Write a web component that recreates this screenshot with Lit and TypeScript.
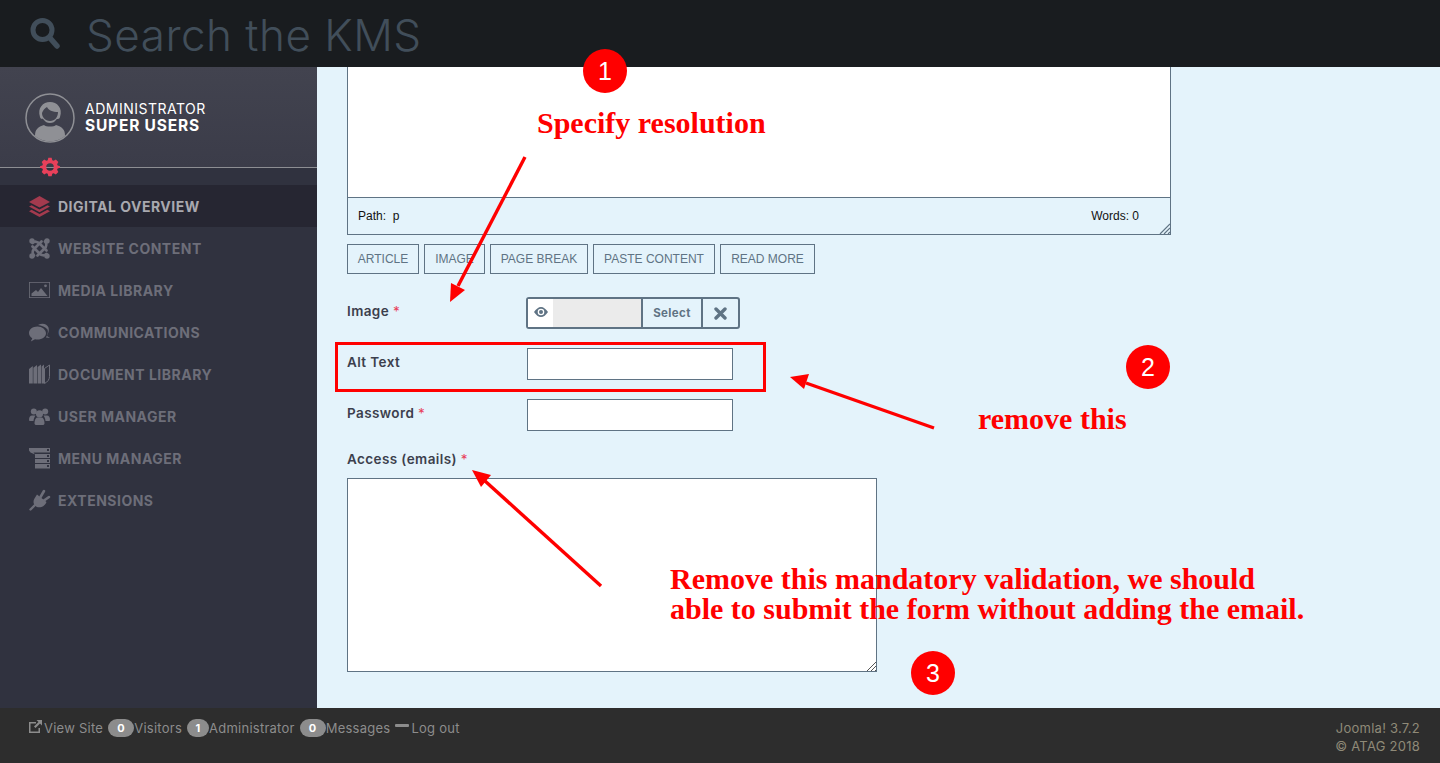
import { html, LitElement, css, svg } from "lit";
import { customElement } from "lit/decorators.js";

const icons: Record<string, unknown> = {
  layers: svg`<path d="M10.500 0 21 6l-10.500 5.600L0 6z"/><path d="M2.600 9.200 0 10.600l10.500 5.700L21 10.600l-2.600-1.400-7.900 4.200z"/><path d="M2.600 13.800 0 15.200 10.500 21 21 15.200l-2.600-1.400-7.900 4.300z"/>`,
  joomla: svg`<g fill="none" stroke="currentColor" stroke-width="2.700" stroke-linecap="round"><path d="M3.500 5c2-2 5-1.500 7 .5l7 7"/><path d="M5 17.500c-2-2-1.500-5 .5-7l7-7"/><path d="M17.500 16c-2 2-5 1.500-7-.5l-7-7"/><path d="M16 3.500c2 2 1.500 5-.5 7l-7 7"/></g><circle cx="3" cy="3" r="2.700"/><circle cx="18" cy="3" r="2.700"/><circle cx="3" cy="18" r="2.700"/><circle cx="18" cy="18" r="2.700"/>`,
  media: svg`<g transform="translate(0 2)"><path fill-rule="evenodd" d="M0 0h21v16H0zm.8.8v14.400h19.400V.8z"/><path d="M2.500 14v-2.500L7 8l2 2 3-4 6.500 8z"/><circle cx="16.500" cy="3.800" r="1.400"/></g>`,
  comm: svg`<path d="M8.500 4.500C3.800 4.500 0 7.300 0 11c0 2.200 1.300 4.100 3.300 5.300l-1.500 3.200 4.200-2.200c.8.200 1.700.300 2.500.300 4.700 0 8.500-2.900 8.500-6.300S13.200 4.500 8.500 4.500z"/><path d="M9 3c4-2.500 9-1.500 10.500 2.500 1 3-.5 6-1.500 8.500l3 2-4-.5c1.500-2.800 2.500-5.800 1.500-8C16.500 5 12.500 3.500 9 3z"/>`,
  docs: svg`<path d="M0 5 3.800 2v17.500H0zM4.400 3.800 8 1v18.500H4.400zM8.600 3 12 .5v19H8.600zM12.600 2.500 15 .5v19h-2.400z"/><path fill="none" stroke="currentColor" d="M15.500 4.500 20.500 1v11.500c0 3-2 5.500-5 7z"/>`,
  users: svg`<g transform="translate(0 1)"><circle cx="4.800" cy="4.500" r="3"/><circle cx="16.200" cy="4.500" r="3"/><circle cx="10.500" cy="6.800" r="3.600"/><path d="M0 13c0-3 1-4.500 3-4.500h3.500C5.300 10 4.800 11.500 4.500 14H1.500C.5 14 0 13.800 0 13zM21 13c0-3-1-4.500-3-4.500h-3.500c1.200 1.500 1.700 3 2 5.500h3c1 0 1.500-.2 1.500-1z"/><path d="M5.500 16c0-3.500 1.500-5.500 3-5.500h4c1.500 0 3 2 3 5.500 0 1.500-.7 2-2 2h-6c-1.300 0-2-.5-2-2z"/></g>`,
  menu: svg`<path d="M0 0h21v4.500H4.500L6 6.500 1.500 4.500 0 2.500z"/><path d="M6 6h15v4H6zM6 11h15v4H6zM6 16h15v4.500H6z"/><g fill="#30323f"><rect x="18" y="1" width="2" height="2"/><rect x="18" y="7" width="2" height="2"/><rect x="18" y="12" width="2" height="2"/><rect x="18" y="17" width="2" height="2"/></g>`,
  plug: svg`<g fill="none" stroke="currentColor" stroke-linecap="round"><path stroke-width="2.600" d="M11.500 7 15 1M15 10.500l5-3.500"/><path stroke-width="2.400" d="M6 15l-4.500 4.500"/></g><path d="M8 4.500 17.500 12c-1 2.500-2.500 4-5 5-2.500.800-5 .300-6.500-1.500C4.200 13.500 4 11 5.500 8.500z"/>`,
};

const nav = [
  ["DIGITAL OVERVIEW", "layers"],
  ["WEBSITE CONTENT", "joomla"],
  ["MEDIA LIBRARY", "media"],
  ["COMMUNICATIONS", "comm"],
  ["DOCUMENT LIBRARY", "docs"],
  ["USER MANAGER", "users"],
  ["MENU MANAGER", "menu"],
  ["EXTENSIONS", "plug"],
];

const gear = svg`<path fill-rule="evenodd" d="M8 0h4l.7 2.800 1.700.7L17 2l3 3-1.500 2.600.7 1.700L22 10v2l-2.800.7-.7 1.700L20 17l-3 3-2.600-1.500-1.700.7L12 22H8l-.7-2.800-1.700-.7L3 20l-3-3 1.500-2.600-.7-1.700L-2 12v-2l2.800-.7.700-1.700L0 5l3-3 2.600 1.500 1.700-.7zM10 6.500a4.500 4.500 0 1 0 0 9 4.500 4.500 0 0 0 0-9z"/>`;

@customElement("app-root")
export class AppRoot extends LitElement {
  static styles = css`
    :host {
      display: flex;
      flex-direction: column;
      position: relative;
      width: 1440px;
      height: 763px;
      overflow: hidden;
      font-family: "Inter", "Liberation Sans", sans-serif;
    }
    .search {
      height: 67px;
      flex: none;
      background: #191c1f;
      display: flex;
      align-items: center;
      gap: 26px;
      padding-left: 30px;
      color: #414e5a;
      font-size: 44px;
      font-weight: 300;
      letter-spacing: 0.5px;
    }
    .search span {
      padding-top: 3px;
    }
    .search svg {
      width: 30px;
      height: 33px;
    }
    .middle {
      flex: 1;
      display: flex;
      min-height: 0;
    }
    .side {
      width: 317px;
      flex: none;
      background: #30323f;
    }
    .profile {
      height: 101px;
      position: relative;
      box-sizing: border-box;
      padding: 26px 0 0 25px;
      display: flex;
      gap: 10px;
      background: linear-gradient(#42434f, #3b3c49);
      border-bottom: 1px solid #8d8e93;
    }
    .avatar {
      width: 50px;
      height: 50px;
      flex: none;
    }
    .who {
      color: #fff;
      font-size: 14px;
      line-height: 17px;
      letter-spacing: 0.5px;
      padding-top: 7px;
    }
    .who b {
      display: block;
      font-size: 15.500px;
      font-weight: 700;
      letter-spacing: 0.8px;
    }
    .gear {
      position: absolute;
      left: 40px;
      top: 90px;
      width: 20px;
      height: 20px;
      fill: #e8405a;
    }
    .nav {
      margin-top: 17px;
    }
    .item {
      height: 42px;
      box-sizing: border-box;
      padding-left: 29px;
      display: flex;
      align-items: center;
      gap: 8px;
      color: #6d6e79;
      font-size: 14px;
      font-weight: 700;
      letter-spacing: 0.5px;
    }
    .item svg {
      width: 21px;
      height: 21px;
      fill: currentColor;
      flex: none;
      overflow: visible;
    }
    .item.on {
      background: #262632;
      color: #a9a9af;
    }
    .item.on svg {
      color: #a33a4e;
    }
    .main {
      flex: 1;
      background: #e4f3fb;
      padding-left: 30px;
      overflow: hidden;
      color: #3c3f4d;
      font-size: 13.500px;
      font-weight: 600;
      letter-spacing: 0.4px;
    }
    .editor {
      width: 824px;
      box-sizing: border-box;
      border: 1px solid #5f7384;
      border-top: 0;
      position: relative;
    }
    .canvas {
      height: 130px;
      background: #fff;
      border-bottom: 1px solid #5f7384;
    }
    .status {
      height: 36px;
      display: flex;
      justify-content: space-between;
      align-items: center;
      padding: 0 31px 0 10px;
      font: 12px "Liberation Sans", sans-serif;
      letter-spacing: 0;
      color: #111;
    }
    .grip {
      position: absolute;
      right: 0;
      bottom: 0;
      width: 11px;
      height: 11px;
    }
    .buttons {
      display: grid;
      grid-template-columns: 72px 61px 98px 122px 95px;
      gap: 5px;
      margin-top: 9px;
    }
    .buttons span {
      height: 30px;
      box-sizing: border-box;
      border: 1px solid #5f7384;
      display: flex;
      align-items: center;
      justify-content: center;
      font: 12px "Liberation Sans", sans-serif;
      letter-spacing: 0;
      color: #5f7384;
    }
    .row {
      display: flex;
      width: 420px;
    }
    .row label {
      width: 180px;
      flex: none;
      line-height: 28px;
    }
    .req {
      color: #e8405a;
      font-weight: 400;
    }
    .picker {
      display: flex;
      height: 32px;
      box-sizing: border-box;
      border: 2px solid #5f7384;
      border-radius: 3px;
      margin-left: -1px;
      color: #5f7384;
    }
    .picker > * {
      display: flex;
      align-items: center;
      justify-content: center;
    }
    .eye {
      width: 25px;
      background: #fff;
      padding-bottom: 2px;
      box-sizing: border-box;
    }
    .empty {
      width: 88px;
      background: #ebebeb;
    }
    .select {
      width: 60px;
      border-left: 2px solid #5f7384;
      box-sizing: border-box;
      font-size: 11.500px;
      font-weight: 700;
    }
    .clear {
      width: 37px;
      border-left: 2px solid #5f7384;
      box-sizing: border-box;
    }
    .input {
      width: 206px;
      height: 32px;
      box-sizing: border-box;
      background: #fff;
      border: 1px solid #5f7384;
    }
    .access {
      margin-top: 20px;
      line-height: 17px;
    }
    .area {
      width: 530px;
      height: 194px;
      box-sizing: border-box;
      margin-top: 10px;
      background: #fff;
      border: 1px solid #5f7384;
      position: relative;
    }
    .foot {
      height: 55px;
      flex: none;
      box-sizing: border-box;
      background: #2d2d2d;
      color: #8c8c8c;
      font-size: 13px;
      letter-spacing: 0.25px;
      display: flex;
      justify-content: space-between;
      padding: 11px 20px 0 29px;
    }
    .links {
      display: flex;
      align-items: flex-start;
      line-height: 18px;
    }
    .links svg {
      width: 13px;
      height: 13px;
      margin: 1px 2px 0 0;
      fill: #8c8c8c;
    }
    .badge {
      height: 18px;
      min-width: 14px;
      padding: 0 6px;
      margin: 0 0 0 5px;
      border-radius: 9px;
      background: #8c8c8c;
      color: #fff;
      font-size: 11px;
      font-weight: 700;
      text-align: center;
    }
    .badge.one {
      min-width: 10px;
    }
    .legal {
      text-align: right;
      line-height: 18px;
      color: #8f8a78;
    }
    .marks {
      position: absolute;
      inset: 0;
      width: 1440px;
      height: 763px;
      pointer-events: none;
    }
    .note {
      position: absolute;
      margin: 0;
      color: #f00;
      font: bold 30px/30px "Liberation Serif", serif;
      white-space: nowrap;
    }
    .dot {
      position: absolute;
      width: 44px;
      height: 44px;
      border-radius: 50%;
      background: #f00;
      color: #fff;
      font: 25px/44px "Liberation Sans", sans-serif;
      text-align: center;
    }
  `;

  render() {
    return html`
      <div class="search">
        <svg viewBox="0 0 30 33"><circle cx="12.500" cy="13" r="9.500" fill="none" stroke="#414e5a" stroke-width="5"/><path d="M20 21l7 8" stroke="#414e5a" stroke-width="5.500" stroke-linecap="round"/></svg>
        <span>Search the KMS</span>
      </div>
      <div class="middle">
        <aside class="side">
          <div class="profile">
            <svg class="avatar" viewBox="0 0 50 50">
              <circle cx="25" cy="25" r="24" fill="none" stroke="#8f9095" stroke-width="1.500"/>
              <path fill="#8f9095" d="M15 24c-3-9 3-15 10-15s13 6 10 15c-1 3-3 1-4 3-1.500 2-3 3-6 3s-4.500-1-6-3c-1-2-3 0-4-3z"/>
              <path fill="#42434f" d="M17 20c1-3 3-5 5-6 1 3 6 5 11 5 0 5-3 9-8 9s-8-4-8-8z"/>
              <path fill="#8f9095" d="M10 43c0-7 3-9 9-11 2 2 10 2 12 0 6 2 9 4 9 11-8 7-22 7-30 0z"/>
            </svg>
            <div class="who">ADMINISTRATOR<b>SUPER USERS</b></div>
            <svg class="gear" viewBox="-2 0 24 22">${gear}</svg>
          </div>
          <div class="nav">
            ${nav.map(
              ([label, icon], i) => html`<div class="item ${i === 0 ? "on" : ""}">
                <svg viewBox="0 0 21 21">${icons[icon]}</svg>${label}
              </div>`
            )}
          </div>
        </aside>
        <main class="main">
          <div class="editor">
            <div class="canvas"></div>
            <div class="status"><span>Path:&nbsp; p</span><span>Words: 0</span></div>
            <svg class="grip" viewBox="0 0 11 11"><path d="M11 1 1 11M11 5l-6 6M11 9l-2 2" stroke="#5f7384" stroke-width="1.200"/></svg>
          </div>
          <div class="buttons">
            ${["ARTICLE", "IMAGE", "PAGE BREAK", "PASTE CONTENT", "READ MORE"].map(
              (b) => html`<span>${b}</span>`
            )}
          </div>
          <div class="row" style="margin-top:23px;height:51px">
            <label>Image <span class="req">*</span></label>
            <div class="picker">
              <span class="eye"><svg width="14" height="10" viewBox="0 0 14 10"><path fill="#5f7384" fill-rule="evenodd" d="M0 5c2-3 4.500-5 7-5s5 2 7 5c-2 3-4.500 5-7 5S2 8 0 5zm7-3.300a3.300 3.300 0 1 0 0 6.600 3.300 3.300 0 0 0 0-6.600z"/><circle cx="7" cy="5" r="2" fill="#5f7384"/></svg></span>
              <span class="empty"></span>
              <span class="select">Select</span>
              <span class="clear"><svg width="13" height="13" viewBox="0 0 13 13"><path d="M2 2l9 9M11 2l-9 9" stroke="#5f7384" stroke-width="3.400" stroke-linecap="round"/></svg></span>
            </div>
          </div>
          <div class="row" style="height:51px">
            <label>Alt Text</label>
            <div class="input"></div>
          </div>
          <div class="row">
            <label>Password <span class="req">*</span></label>
            <div class="input"></div>
          </div>
          <div class="access">Access (emails) <span class="req">*</span></div>
          <div class="area">
            <svg class="grip" viewBox="0 0 11 11"><path d="M11 2 2 11M11 6l-5 5M11 10l-1 1" stroke="#555" stroke-width="1"/></svg>
          </div>
        </main>
      </div>
      <footer class="foot">
        <div class="links">
          <svg viewBox="0 0 13 13"><path d="M0 2h7v1.500H1.500v8h8V8H11v5H0z"/><path d="M7.500 0H13v5.500l-2-2-4.500 4.500-1.500-1.500L9.500 2z"/></svg>View Site
          <span class="badge">0</span>Visitors
          <span class="badge one">1</span>Administrator
          <span class="badge">0</span>Messages
          <svg style="margin:5px 2px 0 5px;width:14px" viewBox="0 0 14 13"><rect y="0" width="14" height="3" rx="1"/></svg>Log out
        </div>
        <div class="legal">Joomla! 3.7.2<br />© ATAG 2018</div>
      </footer>
      <svg class="marks" viewBox="0 0 1440 763">
        <rect x="336.500" y="343.500" width="428" height="47" fill="none" stroke="#f00" stroke-width="3"/>
        <g stroke="#f00" stroke-width="3.400" fill="#f00">
          <path d="M525 157 458 286"/><path stroke="none" d="M450 302l1-19 14 7z"/>
          <path d="M934 428 806 383"/><path stroke="none" d="M790 377l19-3-5 15z"/>
          <path d="M601 586 485 481"/><path stroke="none" d="M472 470l19 5-10 12z"/>
        </g>
      </svg>
      <p class="note" style="left:537px;top:108px">Specify resolution</p>
      <p class="note" style="left:978px;top:404px">remove this</p>
      <p class="note" style="left:670px;top:564px">Remove this mandatory validation, we should<br />able to submit the form without adding the email.</p>
      <div class="dot" style="left:583px;top:49px">1</div>
      <div class="dot" style="left:1126px;top:345px">2</div>
      <div class="dot" style="left:911px;top:651px">3</div>
    `;
  }
}
